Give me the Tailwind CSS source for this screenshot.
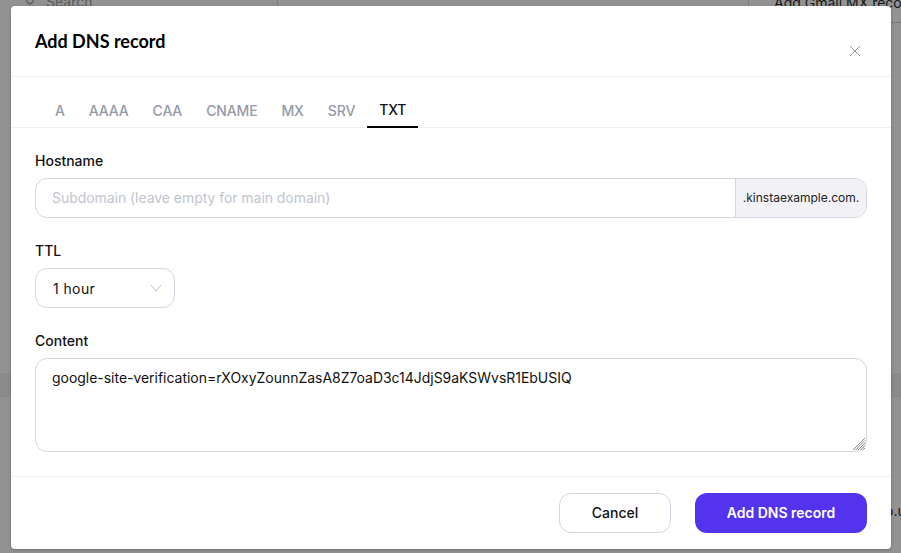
<!DOCTYPE html>
<html lang="en">
<head>
    <meta charset="UTF-8">
    <title>Add DNS record</title>
    <script src="https://cdn.jsdelivr.net/npm/@tailwindcss/browser@4"></script>
</head>
<body class="h-[553px] overflow-hidden bg-[#929292] font-['Inter',sans-serif]">
<div class="relative h-[553px] w-[901px] overflow-hidden">
    <!-- page behind the overlay -->
    <svg class="absolute left-[25px] top-[-4px]" width="11" height="11" viewBox="0 0 11 11" fill="none" stroke="#5a5a5a" stroke-width="1.4"><circle cx="5" cy="4" r="3.5"/><path d="M1 10.5h8"/></svg>
    <div class="absolute left-[46px] top-[-8px] text-sm text-[#5a5a5a]">Search</div>
    <div class="absolute left-[277px] top-0 h-[6px] w-px bg-[#7d7d7d]"></div>
    <div class="absolute left-[748px] top-0 h-[6px] w-px bg-[#7d7d7d]"></div>
    <div class="absolute left-[774px] top-[-7px] text-sm whitespace-nowrap text-[#161616]">Add Gmail MX record</div>
    <div class="absolute left-[891px] top-[22px] w-[10px] border-t border-dotted border-[#666]"></div>
    <div class="absolute left-0 top-[373px] h-[24px] w-[901px] bg-[#8a8a8a]"></div>
    <div class="absolute left-[885px] top-[501px] text-sm text-[#161616]">o.uk</div>

    <!-- modal -->
    <div class="absolute left-[11px] top-[6px] flex h-[543px] w-[880px] flex-col rounded bg-white shadow-[0_1px_3px_rgba(0,0,0,0.25)]">
        <div class="flex h-[71px] shrink-0 items-start justify-between border-b border-[#f1f1f4] pl-6 pr-[31px]">
            <h2 class="mt-[23px] font-['Lato',sans-serif] text-[18px] font-bold leading-6 text-black">Add DNS record</h2>
            <svg class="mt-[40px]" width="10" height="10" viewBox="0 0 10 10" fill="none" stroke="#8f8f98" stroke-width="1"><path d="M0 0l10 10M10 0L0 10"/></svg>
        </div>
        <div class="flex h-[51px] shrink-0 border-b border-[#f1f1f4] pl-8 text-sm font-medium tracking-[-0.14px] text-[#9499a6]">
            <div class="flex h-[51px] items-center px-3 pt-[16px]">A</div>
            <div class="flex h-[51px] items-center px-3 pt-[16px]">AAAA</div>
            <div class="flex h-[51px] items-center px-3 pt-[16px]">CAA</div>
            <div class="flex h-[51px] items-center px-3 pt-[16px]">CNAME</div>
            <div class="flex h-[51px] items-center px-3 pt-[16px]">MX</div>
            <div class="flex h-[51px] items-center px-3 pt-[16px]">SRV</div>
            <div class="flex h-[51px] items-center border-b-2 border-black px-3 pt-[16px] text-[#111]">TXT</div>
        </div>
        <div class="flex flex-1 flex-col px-6 pt-[23px]">
            <label class="text-sm font-medium leading-5 text-[#111]">Hostname</label>
            <div class="mt-[7px] flex h-10 rounded-xl border border-[#d3d5e0]">
                <div class="flex flex-1 items-center px-4 text-sm tracking-[-0.05px] text-[#c1c4cf]">Subdomain (leave empty for main domain)</div>
                <div class="flex w-[131px] items-center justify-center rounded-r-xl border-l border-[#d3d5e0] bg-[#f1f1f6] text-xs text-[#222]">.kinstaexample.com.</div>
            </div>
            <label class="mt-[23px] text-sm font-medium leading-5 text-[#111]">TTL</label>
            <div class="mt-[7px] flex h-10 w-[140px] items-center justify-between rounded-xl border border-[#d3d5e0] pl-[17px] pr-3 text-sm text-[#111]">
                <span class="pt-px tracking-[0.4px]">1 hour</span>
                <svg width="12" height="8" viewBox="0 0 12 8" fill="none" stroke="#b9bcc8" stroke-width="1"><path d="M1 1l5 6 5-6"/></svg>
            </div>
            <label class="mt-[23px] text-sm font-medium leading-5 text-[#111]">Content</label>
            <div class="relative mt-[7px] h-[94px] rounded-xl border border-[#d3d5e0] px-4 py-[9px] text-sm leading-5 tracking-[-0.03px] text-[#111]">
                google-site-verification=rXOxyZounnZasA8Z7oaD3c14JdjS9aKSWvsR1EbUSIQ
                <svg class="absolute bottom-0 right-0" width="14" height="14" viewBox="0 0 14 14" fill="none" stroke="#8a8a8a" stroke-width="1"><path d="M1 13L13 1M3.5 13L13 3.5M6 13l7-7M8.5 13L13 8.5M11 13l2-2"/></svg>
            </div>
        </div>
        <div class="flex h-[73px] shrink-0 items-start justify-end gap-6 border-t border-[#f1f1f4] pr-6 pt-4">
            <div class="flex h-10 w-[112px] items-center justify-center rounded-xl border border-[#d3d5e0] text-sm font-medium text-[#111]">Cancel</div>
            <div class="flex h-10 w-[172px] items-center justify-center rounded-xl bg-[#5333ed] text-sm font-semibold text-white">Add DNS record</div>
        </div>
    </div>
</div>
</body>
</html>
